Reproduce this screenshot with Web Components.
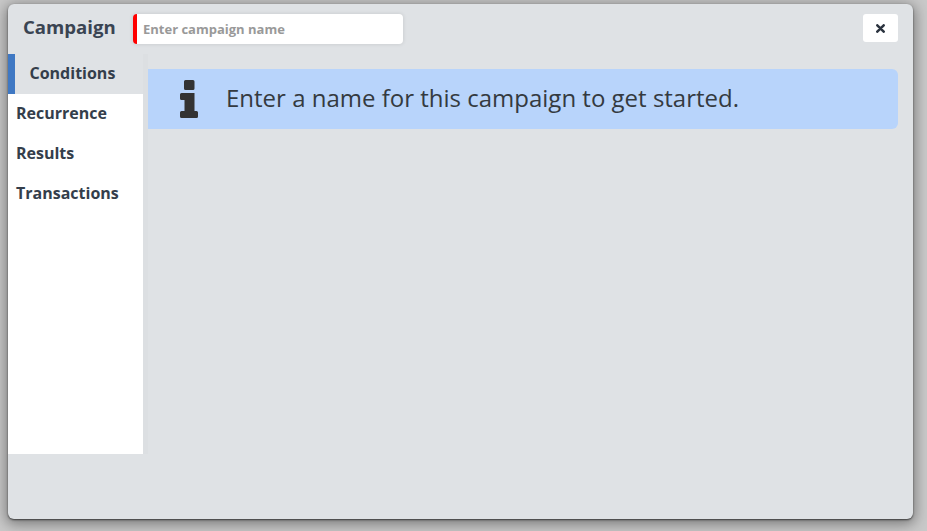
<!DOCTYPE html>
<html>
<head>
<meta charset="utf-8">
<style>
  html, body { margin: 0; height: 100%; }
  body { background: #c9c9c9; font-family: "Open Sans", sans-serif; color: #343a40; overflow: hidden; }
</style>
</head>
<body>
<campaign-modal>
  <campaign-nav slot="nav"></campaign-nav>
  <info-alert>Enter a name for this campaign to get started.</info-alert>
</campaign-modal>
<script>
class CampaignModal extends HTMLElement {
  constructor() {
    super();
    this.attachShadow({ mode: "open" });
    this.shadowRoot.innerHTML = `
      <style>
        :host { display: block; box-sizing: border-box; height: 531px; padding: 4px 14px 12px 8px; }
        .window {
          height: 515px; box-sizing: border-box; background: #dfe2e5; border-radius: 6px;
          box-shadow: 0 1px 2px rgba(0,0,0,.6), 0 3px 14px 2px rgba(0,0,0,.4);
          display: flex; flex-direction: column;
        }
        header { height: 50px; display: flex; align-items: flex-start; padding: 9px 15px 0 15px; box-sizing: border-box; }
        h1 { margin: 0; font-size: 18.6px; font-weight: 700; line-height: 27px; color: #3a4452; width: 110px; }
        input {
          width: 270px; height: 30px; margin-top: 1px; box-sizing: border-box; border: 0; border-left: 4px solid #f00;
          border-radius: 4px; padding: 0 6px; font: 700 13px "Open Sans", sans-serif; background: #fff;
          box-shadow: 0 0 4px rgba(0,0,0,.12); outline: none;
        }
        input::placeholder { color: #999; opacity: 1; }
        button {
          margin-left: auto; margin-top: 1px; width: 35px; height: 28px; border: 0; border-radius: 3px; background: #fff;
          padding: 0; display: flex; align-items: center; justify-content: center;
        }
        .body { display: flex; flex: 1; min-height: 0; }
        .gutter { flex: none; width: 5px; height: 400px; background: #dcdfe2; }
        main { flex: 1; padding: 15px 15px 0 0; }
      </style>
      <div class="window">
        <header>
          <h1>Campaign</h1>
          <input type="text" placeholder="Enter campaign name">
          <button aria-label="Close">
            <svg width="9" height="9" viewBox="0 0 9 9"><path d="M1.300 1.300L7.700 7.700M7.700 1.300L1.300 7.700" stroke="#2b333f" stroke-width="2.500" stroke-linecap="round"/></svg>
          </button>
        </header>
        <div class="body">
          <slot name="nav"></slot>
          <div class="gutter"></div>
          <main><slot></slot></main>
        </div>
      </div>`;
  }
}

class CampaignNav extends HTMLElement {
  constructor() {
    super();
    this.attachShadow({ mode: "open" });
    this.shadowRoot.innerHTML = `
      <style>
        :host { display: block; width: 135px; height: 400px; background: #fff; }
        div { height: 40px; line-height: 38px; padding-left: 8px; font-size: 16px; font-weight: 700; color: #343e4b; white-space: nowrap; }
        .active { background: #dfe2e5; border-left: 7px solid #3f78c3; padding-left: 14.500px; box-sizing: border-box; }
      </style>
      <div class="active">Conditions</div>
      <div>Recurrence</div>
      <div>Results</div>
      <div>Transactions</div>`;
  }
}

class InfoAlert extends HTMLElement {
  constructor() {
    super();
    this.attachShadow({ mode: "open" });
    this.shadowRoot.innerHTML = `
      <style>
        :host {
          display: flex; align-items: center; height: 60px; background: #b8d4fb;
          border-radius: 0 6px 6px 0; font-size: 24px; color: #343a40;
        }
        svg { margin-left: 32px; margin-right: 28px; flex: none; }
        span { display: block; margin-top: -4px; }
      </style>
      <svg width="18" height="38" viewBox="0 0 18 38">
        <path fill="#333" d="M5.500 0h7.500a1.500 1.500 0 0 1 1.500 1.500v7a1.500 1.500 0 0 1-1.500 1.500H5.500a1.500 1.500 0 0 1-1.500-1.500v-7a1.500 1.500 0 0 1 1.500-1.500z
          M1.500 13h13v18h2a1.500 1.500 0 0 1 1.500 1.500v4a1.500 1.500 0 0 1-1.500 1.500H1.500A1.500 1.500 0 0 1 0 36.500v-4A1.500 1.500 0 0 1 1.500 31h3v-11h-3A1.500 1.500 0 0 1 0 18.500v-4A1.500 1.500 0 0 1 1.500 13z"/>
      </svg>
      <span><slot></slot></span>`;
  }
}

customElements.define("campaign-modal", CampaignModal);
customElements.define("campaign-nav", CampaignNav);
customElements.define("info-alert", InfoAlert);
</script>
</body>
</html>
